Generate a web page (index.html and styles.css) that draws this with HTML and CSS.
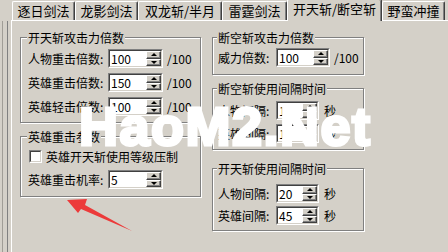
FILE: index.html
```html
<!DOCTYPE html>
<html>
<head>
<meta charset="utf-8">
<link rel="stylesheet" href="styles.css">
</head>
<body>
<div class="screen">
  <div class="tabstrip">
    <div class="tab t1">逐日剑法</div>
    <div class="tab t2">龙影剑法</div>
    <div class="tab t3">双龙斩/半月</div>
    <div class="tab t4">雷霆剑法</div>
    <div class="tab t5 sel">开天斩/断空斩</div>
    <div class="tab t6">野蛮冲撞</div>
  </div>
  <div class="main">
    <div class="edge"><div class="edge-in"></div></div>
    <div class="page">
      <div class="col col-l">
        <div class="group g1">
          <div class="gtitle">开天斩攻击力倍数</div>
          <div class="rows">
            <div class="row"><span class="lab">人物重击倍数:</span><div class="spin w55"><div class="spin-in"><span class="val">100</span><div class="btns"><div class="btn up"></div><div class="btn dn"></div></div></div></div><span class="suf">/100</span></div>
            <div class="row"><span class="lab">英雄重击倍数:</span><div class="spin w55"><div class="spin-in"><span class="val">150</span><div class="btns"><div class="btn up"></div><div class="btn dn"></div></div></div></div><span class="suf">/100</span></div>
            <div class="row"><span class="lab">英雄轻击倍数:</span><div class="spin w55"><div class="spin-in"><span class="val">100</span><div class="btns"><div class="btn up"></div><div class="btn dn"></div></div></div></div><span class="suf">/100</span></div>
          </div>
        </div>
        <div class="group g2">
          <div class="gtitle">英雄重击参数</div>
          <div class="cbrow"><div class="cb"><div class="cb-in"></div></div><span>英雄开天斩使用等级压制</span></div>
          <div class="row r2"><span class="lab">英雄重击机率:</span><div class="spin w55"><div class="spin-in"><span class="val">5</span><div class="btns"><div class="btn up"></div><div class="btn dn"></div></div></div></div></div>
        </div>
      </div>
      <div class="col col-r">
        <div class="group g3">
          <div class="gtitle">断空斩攻击力倍数</div>
          <div class="rows">
            <div class="row"><span class="lab">威力倍数:</span><div class="spin w54"><div class="spin-in"><span class="val">100</span><div class="btns"><div class="btn up"></div><div class="btn dn"></div></div></div></div><span class="suf">/100</span></div>
          </div>
        </div>
        <div class="group g4">
          <div class="gtitle">断空斩使用间隔时间</div>
          <div class="rows">
            <div class="row"><span class="lab">人物间隔:</span><div class="spin w43"><div class="spin-in"><span class="val">1</span><div class="btns"><div class="btn up"></div><div class="btn dn"></div></div></div></div><span class="sec">秒</span></div>
            <div class="row"><span class="lab">英雄间隔:</span><div class="spin w43"><div class="spin-in"><span class="val">1</span><div class="btns"><div class="btn up"></div><div class="btn dn"></div></div></div></div><span class="sec">秒</span></div>
          </div>
        </div>
        <div class="group g5">
          <div class="gtitle">开天斩使用间隔时间</div>
          <div class="rows">
            <div class="row"><span class="lab">人物间隔:</span><div class="spin w43"><div class="spin-in"><span class="val">20</span><div class="btns"><div class="btn up"></div><div class="btn dn"></div></div></div></div><span class="sec">秒</span></div>
            <div class="row"><span class="lab">英雄间隔:</span><div class="spin w43"><div class="spin-in"><span class="val">45</span><div class="btns"><div class="btn up"></div><div class="btn dn"></div></div></div></div><span class="sec">秒</span></div>
          </div>
        </div>
      </div>
    </div>
  </div>
  <div class="wm">HaoM2.Net</div>
  <svg class="arrow" width="72" height="40" viewBox="0 0 72 40"><polygon points="3,5 23,4 21,10 68,36 17,14 14,18" fill="#ec3a3a"/></svg>
</div>
</body>
</html>
```
FILE: styles.css
```css
* { box-sizing: border-box; }
html, body { margin: 0; padding: 0; }
body {
  background: #d4d0c8;
  font-family: "Noto Sans CJK SC", "Noto Sans", sans-serif;
  font-size: 12px;
  color: #000;
  width: 448px;
  height: 252px;
  overflow: hidden;
}
.screen { position: relative; width: 448px; height: 252px; display: flex; flex-direction: column; overflow: hidden; }

.tabstrip {
  height: 21px; flex: none;
  margin-left: 11px; padding-left: 1px;
  border-bottom: 1px solid #fff;
  display: flex; align-items: flex-end;
}
.tab {
  height: 19px; flex: none;
  border-top: 1px solid #fff; border-left: 1px solid #fff; border-right: 1px solid #404040;
  box-shadow: inset -1px 0 0 #808080;
  border-radius: 2px 2px 0 0;
  background: #d4d0c8;
  font-size: 13px; line-height: 15px;
  padding-top: 1px;
  text-align: center; white-space: nowrap;
}
.tab.sel { height: 22px; margin-bottom: -1px; }
.t1 { width: 63px; }
.t2 { width: 63px; }
.t3 { width: 84px; }
.t4 { width: 65px; }
.t5 { width: 95px; }
.t6 { width: 63px; }

.main { flex: 1; display: flex; min-height: 0; }
.edge { width: 11px; flex: none; padding-left: 2px; }
.edge-in { width: 6px; height: 100%; border-left: 1px solid #a09d96; border-right: 1px solid #808080; }
.page {
  flex: 1;
  border-left: 1px solid #fff;
  padding: 16px 0 0 8px;
  display: flex; gap: 11px; align-items: flex-start;
}
.col { display: flex; flex-direction: column; flex: none; }
.col-l { width: 181px; gap: 13px; }
.col-r { width: 152px; }

.group {
  border: 1px solid #808080;
  box-shadow: inset 1px 1px 0 #fff, 1px 1px 0 #fff;
  display: flex; flex-direction: column;
}
.col-l .group { padding: 0 7px; }
.col-r .group { padding: 0 5px; }
.gtitle {
  align-self: flex-start;
  margin: -7px 0 0 -1px;
  padding: 0 1px;
  background: #d4d0c8;
  line-height: 14px;
  white-space: nowrap;
}
.rows { display: flex; flex-direction: column; }
.row { display: flex; align-items: center; height: 19px; white-space: nowrap; }
.lab { line-height: 14px; flex: none; }
.col-l .lab { width: 80px; }
.col-r .lab { width: 58px; }

.g1 { padding-bottom: 6px !important; }
.g1 .rows { margin-top: 4px; gap: 5px; }
.g2 { padding-bottom: 7px !important; }
.g2 .cbrow { margin-top: 6px; }
.g2 .r2 { margin-top: 7px; }
.g3 { padding-bottom: 7px !important; }
.g3 .rows { margin-top: 3px; }
.g4 { margin-top: 13px; padding-bottom: 6px !important; }
.g4 .rows { margin-top: 5px; gap: 4px; }
.g5 { margin-top: 18px; padding-bottom: 5px !important; }
.g5 .rows { margin-top: 8px; gap: 3px; }

.spin {
  height: 19px; flex: none;
  border: 1px solid; border-color: #808080 #fff #fff #808080;
}
.w55 { width: 55px; }
.w54 { width: 54px; }
.w43 { width: 43px; }
.spin-in {
  height: 100%;
  border: 1px solid; border-color: #404040 #d4d0c8 #d4d0c8 #404040;
  background: #fff;
  display: flex;
}
.val { flex: 1; padding-left: 1px; line-height: 15px; }
.btns { width: 15px; flex: none; display: flex; flex-direction: column; }
.btn {
  flex: 1;
  background: #d4d0c8;
  border: 1px solid; border-color: #fff #404040 #404040 #fff;
  box-shadow: inset -1px -1px 0 #808080;
  display: flex; align-items: center; justify-content: center;
}
.up::before { content: ""; border-left: 3px solid transparent; border-right: 3px solid transparent; border-bottom: 3px solid #000; }
.dn::before { content: ""; border-left: 3px solid transparent; border-right: 3px solid transparent; border-top: 3px solid #000; }
.suf { margin-left: 4px; line-height: 14px; }
.sec { margin-left: 5px; line-height: 14px; }

.cbrow { display: flex; align-items: center; height: 13px; gap: 4px; white-space: nowrap; line-height: 14px; }
.cb {
  width: 13px; height: 13px; flex: none; margin-left: 1px;
  border: 1px solid; border-color: #808080 #fff #fff #808080;
}
.cb-in { height: 100%; border: 1px solid; border-color: #404040 #d4d0c8 #d4d0c8 #404040; background: #fff; }

.wm {
  position: absolute; left: 79px; top: 99px;
  font-family: "Liberation Sans", Arial, sans-serif;
  font-weight: bold; font-size: 54px; line-height: 54px;
  letter-spacing: 1.5px;
  color: #fff; white-space: nowrap;
  -webkit-text-stroke: 3px #fff;
  text-shadow: 0 0 1px rgba(255,255,255,0.7);
}
.arrow { position: absolute; left: 64px; top: 195px; }
```
